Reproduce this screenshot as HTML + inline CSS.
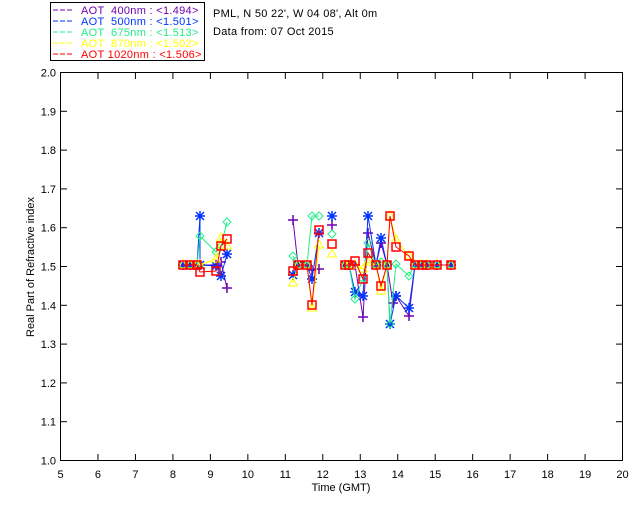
<!DOCTYPE html>
<html><head><meta charset="utf-8"><style>
html,body{margin:0;padding:0;background:#fff;width:640px;height:512px;overflow:hidden}
svg{display:block}
text{font-family:"Liberation Sans",sans-serif;font-size:11px}
.lg{letter-spacing:0.3px}
</style></head><body>
<svg id="s" width="640" height="512" xmlns="http://www.w3.org/2000/svg">
<rect x="50.5" y="2.5" width="154" height="58" fill="none" stroke="#000"/>
<g font-size="11" class="lg">
<line x1="53" y1="10" x2="74" y2="10" stroke="#7000b0" stroke-dasharray="5,2"/>
<text x="81" y="14" fill="#7000b0" xml:space="preserve">AOT  400nm : &lt;1.494&gt;</text>
<line x1="53" y1="21" x2="74" y2="21" stroke="#0033ff" stroke-dasharray="5,2"/>
<text x="81" y="25" fill="#0033ff" xml:space="preserve">AOT  500nm : &lt;1.501&gt;</text>
<line x1="53" y1="32" x2="74" y2="32" stroke="#22ee88" stroke-dasharray="5,2"/>
<text x="81" y="36" fill="#22ee88" xml:space="preserve">AOT  675nm : &lt;1.513&gt;</text>
<line x1="53" y1="43" x2="74" y2="43" stroke="#ffff00" stroke-dasharray="5,2"/>
<text x="81" y="47" fill="#ffff00" xml:space="preserve">AOT  870nm : &lt;1.502&gt;</text>
<line x1="53" y1="54" x2="74" y2="54" stroke="#ff0000" stroke-dasharray="5,2"/>
<text x="81" y="58" fill="#ff0000" xml:space="preserve">AOT 1020nm : &lt;1.506&gt;</text>
</g>
<text x="213" y="17" class="lg">PML, N 50 22', W 04 08', Alt 0m</text>
<text x="213" y="35" class="lg">Data from: 07 Oct 2015</text>
<rect x="60.5" y="72.5" width="562" height="388" fill="none" stroke="#000"/>
<g id="ax"></g>
<g id="data"></g>
<text x="341" y="491" text-anchor="middle">Time (GMT)</text>
<text transform="translate(34,267) rotate(-90)" text-anchor="middle">Real Part of Refractive index</text>
</svg>
<script>
var ns="http://www.w3.org/2000/svg",ax=document.getElementById('ax'),dg=document.getElementById('data');
function el(t,a,p){var e=document.createElementNS(ns,t);for(var k in a)e.setAttribute(k,a[k]);(p||ax).appendChild(e);return e;}
for(var t=5;t<=20;t++){var x=60.5+(t-5)*37.47;
 if(t>5&&t<20){el('line',{x1:x,y1:460,x2:x,y2:454,stroke:'#000'});el('line',{x1:x,y1:73,x2:x,y2:79,stroke:'#000'});}
 var tx=el('text',{x:x,y:478,'text-anchor':'middle'});tx.textContent=t;}
for(var i=0;i<=10;i++){var y=460.5-i*38.8;
 if(i>0&&i<10){el('line',{x1:61,y1:y,x2:67,y2:y,stroke:'#000'});el('line',{x1:622,y1:y,x2:616,y2:y,stroke:'#000'});}
 var ty=el('text',{x:56,y:y+4,'text-anchor':'end'});ty.textContent=(1+i/10).toFixed(1);}
var tail=[[415,265],[422,265],[427,265],[437,265],[451,265]];
var S={
P:{c:'#7000b0',m:'plus',d:[[[183,265],[190,265],[197,265],[200,265],[216,265],[221,262],[227,288]],[[293,220],[298,265],[307,265],[312,270],[319,269]],[[332,225]],[[345,265],[349,265],[355,265],[363,317],[368,233],[376,265],[381,243],[387,265],[393,303],[396,296],[409,316]].concat(tail)]},
B:{c:'#0033ff',m:'star',d:[[[183,265],[190,265],[197,265],[200,216],[200,265],[216,266],[221,276],[227,254]],[[293,275],[298,265],[307,265],[312,279],[319,233]],[[332,216]],[[345,265],[349,265],[355,292],[363,296],[368,216],[376,265],[381,238],[387,265],[390,324],[396,296],[409,308]].concat(tail)]},
G:{c:'#22ee88',m:'dia',d:[[[183,265],[190,265],[197,265],[200,236],[216,252],[221,246],[227,222]],[[293,256],[298,265],[307,265],[312,216],[319,216]],[[332,234]],[[345,265],[349,265],[355,299],[363,279],[368,243],[376,265],[381,262],[387,265],[390,324],[396,264],[409,276]].concat(tail)]},
Y:{c:'#ffff00',m:'tri',d:[[[183,265],[190,265],[197,265],[200,265],[216,259],[221,238],[227,246]],[[293,283],[298,265],[307,265],[312,308],[319,245]],[[332,254]],[[345,265],[349,265],[355,265],[363,269],[368,262],[376,265],[381,291],[387,265],[390,216],[396,240],[409,256]].concat(tail)]},
R:{c:'#ff0000',m:'sq',d:[[[183,265],[190,265],[197,265],[200,272],[216,271],[221,246],[227,239]],[[293,271],[298,265],[307,265],[312,305],[319,230]],[[332,244]],[[345,265],[349,265],[355,261],[363,279],[368,253],[376,265],[381,286],[387,265],[390,216],[396,247],[409,256]].concat(tail)]}
};
function mk(m,x,y,c){
 if(m=='plus'){el('path',{d:'M'+(x-5)+' '+y+'h10M'+x+' '+(y-5)+'v10',stroke:c,'stroke-width':1.5,fill:'none'},dg);}
 else if(m=='star'){el('path',{d:'M'+(x-5)+' '+y+'h10M'+x+' '+(y-5)+'v10M'+(x-4)+' '+(y-4)+'l8 8M'+(x+4)+' '+(y-4)+'l-8 8',stroke:c,'stroke-width':1.5,fill:'none'},dg);}
 else if(m=='dia'){el('path',{d:'M'+x+' '+(y-4)+'l4 4-4 4-4-4z',stroke:c,fill:'none'},dg);}
 else if(m=='tri'){el('path',{d:'M'+x+' '+(y-5)+'l4.5 8h-9z',stroke:c,fill:'none'},dg);}
 else {el('rect',{x:x-4,y:y-4,width:8,height:8,stroke:c,'stroke-width':1.5,fill:'none'},dg);}
}
['P','B','G','Y','R'].forEach(function(k){var s=S[k];s.d.forEach(function(seg){
 if(seg.length>1)el('polyline',{points:seg.map(function(p){return p.join(',')}).join(' '),stroke:s.c,'stroke-width':1,fill:'none'},dg);
 seg.forEach(function(p){mk(s.m,p[0],p[1],s.c);});});});
</script>
</body></html>
